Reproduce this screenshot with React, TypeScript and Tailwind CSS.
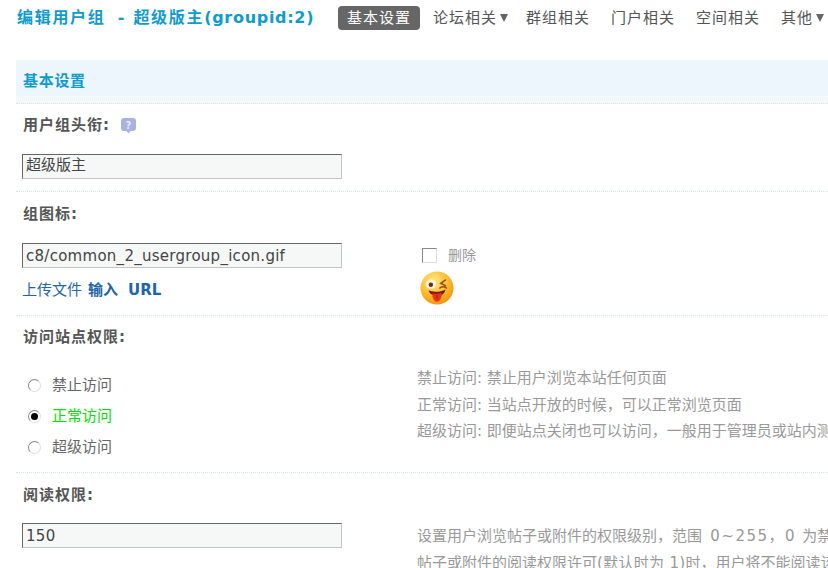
import React from "react";

const font = "font-['DejaVu_Sans','Noto_Sans_CJK_SC',sans-serif]";

const NavItem: React.FC<{ label: string; active?: boolean; caret?: boolean }> = ({ label, active, caret }) => (
  <div
    className={`flex items-center h-6 rounded text-[15px] leading-6 tracking-[1px] px-[9px] ${
      active ? "bg-[#666] text-white" : "text-[#555]"
    }`}
  >
    <span>{label}</span>
    {caret && <span className="w-0 h-0 border-x-[4.5px] border-x-transparent border-t-[8px] border-t-[#666] ml-[3px] mr-[-3px]" />}
  </div>
);

const Label: React.FC<{ children: React.ReactNode }> = ({ children }) => (
  <div className="text-[15px] leading-6 font-bold tracking-[1px] text-[#555]">{children}</div>
);

const TextBox: React.FC<{ value: string; cjk?: boolean }> = ({ value, cjk }) => (
  <div
    className={`w-[320px] h-[25px] bg-[#f6f8f8] border border-[#c4c4c4] border-t-[#666] border-l-[#666] text-[15px] px-[3px] text-[#444] whitespace-nowrap ${
      cjk ? "leading-[21px]" : "leading-[24px] tracking-[0.27px]"
    }`}
  >
    {value}
  </div>
);

const Radio: React.FC<{ label: string; checked?: boolean }> = ({ label, checked }) => (
  <div className="flex items-center h-[31px] pl-[5px]">
    <span className="w-[13px] h-[13px] rounded-full border border-[#888] border-r-[#ddd] border-b-[#ddd] bg-white flex items-center justify-center">
      {checked && <span className="w-[7px] h-[7px] rounded-full bg-black" />}
    </span>
    <span className={`ml-[11px] text-[15px] ${checked ? "text-[#00e000]" : "text-[#666]"}`}>{label}</span>
  </div>
);

const Row: React.FC<{ children: React.ReactNode; className?: string }> = ({ children, className }) => (
  <div className={`pl-[7px] border-b border-dotted border-[#cfe6f5] ${className ?? ""}`}>{children}</div>
);

const HelpIcon = () => (
  <svg width="17" height="17" viewBox="0 0 17 17">
    <path d="M4 1h9a3 3 0 0 1 3 3v7a3 3 0 0 1-3 3h-2.5L8.5 16.5 6.5 14H4a3 3 0 0 1-3-3V4a3 3 0 0 1 3-3z" fill="#a9b3e2" />
    <text x="8.5" y="11.5" textAnchor="middle" fontSize="10" fontWeight="700" fill="#e8ebf8" fontFamily="DejaVu Sans">?</text>
  </svg>
);

const WinkFace = () => (
  <svg width="34" height="34" viewBox="0 0 36 36">
    <defs>
      <radialGradient id="face" cx="0.4" cy="0.3" r="0.8">
        <stop offset="0" stopColor="#ffe98a" />
        <stop offset="0.55" stopColor="#fdbb2c" />
        <stop offset="1" stopColor="#ee8a08" />
      </radialGradient>
    </defs>
    <circle cx="18" cy="18" r="17.5" fill="url(#face)" />
    <ellipse cx="11.5" cy="14" rx="5.5" ry="5" fill="#fff6dc" />
    <circle cx="11.5" cy="14.5" r="2.4" fill="#7a2a0a" />
    <path d="M27 9.5l-5 3.5 5 2.5M21 18c2-1.5 5-1.5 7 0" stroke="#9a4a10" strokeWidth="1.6" fill="none" strokeLinecap="round" />
    <path d="M9 20.5c4 2 13 2 18-1-1 5-5 7-9 7s-8-2-9-6z" fill="#7a1a08" />
    <path d="M13 23.5c3 1 7 1 10-.5 0 5-1 9-5 9.5-4-.5-5-5-5-9z" fill="#e8351a" />
    <path d="M18 25v5" stroke="#a81c0c" strokeWidth="1" />
  </svg>
);

export default function App() {
  return (
    <div className={`w-[828px] h-[568px] overflow-hidden bg-white pl-4 ${font}`}>
      <div className="w-[900px]">
        <div className="flex items-center h-[60px] pb-[24px]">
          <h1 className="w-[322px] shrink-0 pl-px text-[16px] leading-6 font-bold text-[#0f9bcc] whitespace-pre">
            <span className="tracking-[1.7px]">编辑用户组</span>
            <span className="ml-[5px] tracking-[1.7px]"> - 超级版主</span>
            <span className="tracking-[0.7px]">(groupid:2)</span>
          </h1>
          <div className="flex items-center gap-[3px] whitespace-nowrap">
            <div className="mr-px">
              <NavItem label="基本设置" active />
            </div>
            <NavItem label="论坛相关" caret />
            <NavItem label="群组相关" />
            <NavItem label="门户相关" />
            <NavItem label="空间相关" />
            <NavItem label="其他" caret />
          </div>
        </div>

        <div className="h-9 bg-[#eef6fd] pl-[7px] text-[15px] leading-[43px] font-bold tracking-[0.7px] text-[#0f9bcc]">基本设置</div>
        <div className="h-[8px] bg-[#f5f8f8] border-b border-dotted border-[#cfe6f5]" />

        <Row className="h-[88px] pt-[9px]">
          <div className="flex items-center gap-[10px] h-6">
            <Label>用户组头衔:</Label>
            <HelpIcon />
          </div>
          <div className="mt-[17px] -ml-px">
            <TextBox value="超级版主" cjk />
          </div>
        </Row>

        <Row className="h-[124px] pt-[10px]">
          <Label>组图标:</Label>
          <div className="flex mt-[17px] -ml-px">
            <div className="w-[400px] shrink-0">
              <TextBox value="c8/common_2_usergroup_icon.gif" />
              <div className="flex items-center h-6 mt-[10px] text-[15px] text-[#1f65a8]">
                <span>上传文件</span>
                <span className="ml-[6px] font-bold">输入</span>
                <span className="ml-[10px] font-bold">URL</span>
              </div>
            </div>
            <div>
              <div className="flex items-center h-[25px]">
                <span className="w-[15px] h-[15px] bg-white border border-[#ddd] border-t-[#888] border-l-[#888]" />
                <span className="ml-[11px] text-[14px] text-[#999]">删除</span>
              </div>
              <div className="mt-[3px] -ml-[2px]">
                <WinkFace />
              </div>
            </div>
          </div>
        </Row>

        <Row className="h-[157px] pt-[9px]">
          <Label>访问站点权限:</Label>
          <div className="flex">
            <div className="w-[394px] shrink-0 pt-[21px]">
              <Radio label="禁止访问" />
              <Radio label="正常访问" checked />
              <Radio label="超级访问" />
            </div>
            <div className="text-[15px] leading-[26.5px] text-[#999] whitespace-nowrap pt-[16px]">
              <p>禁止访问: 禁止用户浏览本站任何页面</p>
              <p>正常访问: 当站点开放的时候，可以正常浏览页面</p>
              <p>超级访问: 即便站点关闭也可以访问，一般用于管理员或站内测试使用</p>
            </div>
          </div>
        </Row>

        <div className="pl-[7px] pt-[10px]">
          <Label>阅读权限:</Label>
          <div className="flex mt-[16px]">
            <div className="w-[394px] shrink-0 -ml-px mr-px">
              <TextBox value="150" />
            </div>
            <div className="text-[15px] leading-[26.5px] text-[#999] whitespace-nowrap">
              <p>
                设置用户浏览帖子或附件的权限级别，范围
                <span className="ml-[2px] tracking-[1.5px]"> 0~255，0 </span>
                为禁止用户浏览任何帖子或附件。当用户的阅读权限小于
              </p>
              <p>
                帖子或附件的阅读权限许可<span className="tracking-[0.3px]">(默认时为 1)</span>时，用户将不能阅读该帖子或下载该附件
              </p>
            </div>
          </div>
        </div>
      </div>
    </div>
  );
}
